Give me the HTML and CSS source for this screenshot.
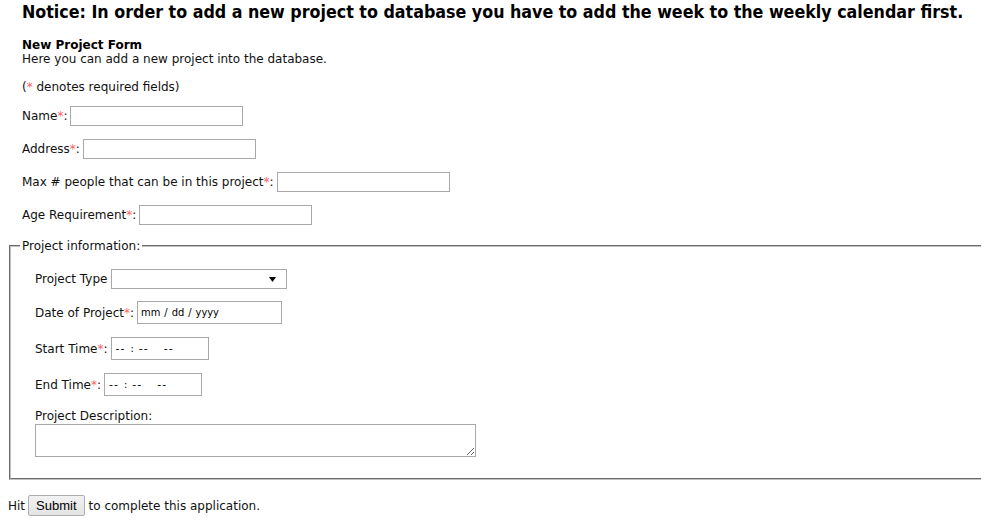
FILE: index.html
```html
<!DOCTYPE html>
<html>
<head>
<meta charset="utf-8">
<title>New Project Form</title>
<link rel="stylesheet" href="styles.css">
</head>
<body>
<div class="intro">
  <h1 class="notice">Notice: In order to add a new project to database you have to add the week to the weekly calendar first.</h1>
  <div class="form-title">New Project Form</div>
  <div class="form-desc">Here you can add a new project into the database.</div>
  <div class="req-note">(<span class="req">*</span> denotes required fields)</div>
  <div class="row first-row"><span class="label">Name<span class="req">*</span>:</span><input class="text" type="text"></div>
  <div class="row"><span class="label">Address<span class="req">*</span>:</span><input class="text" type="text"></div>
  <div class="row"><span class="label">Max # people that can be in this project<span class="req">*</span>:</span><input class="text" type="text"></div>
  <div class="row"><span class="label">Age Requirement<span class="req">*</span>:</span><input class="text" type="text"></div>
</div>
<fieldset class="project-info">
  <legend class="legend">Project information:</legend>
  <div class="fs-body">
    <div class="row row-select"><span class="label">Project Type</span><div class="select"><svg class="arrow" width="7" height="5" viewBox="0 0 7 5"><path d="M0 0H7L3.5 5Z" fill="#000"/></svg></div></div>
    <div class="row row-tall"><span class="label">Date of Project<span class="req">*</span>:</span><div class="field date"><span>mm</span><span class="sep">/</span><span>dd</span><span class="sep">/</span><span>yyyy</span></div></div>
    <div class="row row-tall"><span class="label">Start Time<span class="req">*</span>:</span><div class="field time"><span class="dash">--</span><span class="sep">:</span><span class="dash">--</span><span class="dash ampm">--</span></div></div>
    <div class="row row-tall"><span class="label">End Time<span class="req">*</span>:</span><div class="field time"><span class="dash">--</span><span class="sep">:</span><span class="dash">--</span><span class="dash ampm">--</span></div></div>
    <div class="desc-label">Project Description:</div>
    <textarea class="desc" rows="2"></textarea>
  </div>
</fieldset>
<div class="submit-row"><span>Hit</span><button class="submit" type="button">Submit</button><span>to complete this application.</span></div>
</body>
</html>
```
FILE: styles.css
```css
html {
  overflow: hidden;
}
body {
  margin: 0 8px;
  font-family: "DejaVu Sans", sans-serif;
  font-size: 12px;
  line-height: 14px;
  color: #111;
  background: #fff;
}
.intro {
  margin-left: 14px;
  display: flex;
  flex-direction: column;
}
.notice {
  margin: 0;
  font-family: "DejaVu Sans Condensed", "DejaVu Sans", sans-serif;
  font-size: 17.7px;
  line-height: 24px;
  font-weight: bold;
  color: #000;
  white-space: nowrap;
}
.form-title {
  margin-top: 14px;
  font-weight: bold;
  color: #000;
}
.req-note {
  margin-top: 14px;
}
.req {
  color: #ff6060;
}
.row {
  display: flex;
  align-items: center;
  gap: 3px;
  height: 20px;
  margin-top: 13px;
}
.first-row {
  margin-top: 12px;
}
.text {
  box-sizing: border-box;
  width: 173px;
  height: 20px;
  border: 1px solid #a9a9a9;
  margin: 0;
  padding: 0 2px;
  font: inherit;
  background: #fff;
}
.project-info {
  margin: 14px -30px 0 1px;
  padding: 16px 0 21px 9px;
  border: 2px groove #c0c0c0;
}
.legend {
  padding: 0 2px;
  line-height: 14px;
}
.fs-body {
  padding-left: 15px;
  display: flex;
  flex-direction: column;
  align-items: flex-start;
}
.fs-body .row:first-child {
  margin-top: 0;
}
.row-select {
  height: 20px;
  gap: 4px;
}
.select {
  box-sizing: border-box;
  width: 176px;
  height: 20px;
  border: 1px solid #a9a9a9;
  background: #fff;
  display: flex;
  align-items: center;
  justify-content: flex-end;
  padding-right: 10px;
}
.arrow {
  display: block;
}
.row-tall {
  height: 23px;
  margin-top: 12px;
}
.row-tall + .row-tall {
  margin-top: 13px;
}
.field {
  box-sizing: border-box;
  height: 23px;
  border: 1px solid #a9a9a9;
  background: #fff;
  display: flex;
  align-items: center;
  font-family: "DejaVu Sans Condensed", "DejaVu Sans", sans-serif;
  font-size: 11px;
  color: #000;
}
.date {
  width: 145px;
  padding-left: 3px;
  gap: 4px;
}
.time {
  width: 98px;
  padding-left: 4px;
  gap: 5px;
}
.dash {
  font-family: "DejaVu Sans", sans-serif;
  letter-spacing: 1px;
}
.time .ampm {
  margin-left: 10px;
}
.desc-label {
  margin-top: 13px;
  line-height: 14px;
}
.desc {
  display: block;
  box-sizing: border-box;
  width: 441px;
  height: 33px;
  margin: 1px 0 0;
  border: 1px solid #a9a9a9;
  padding: 2px;
  font: inherit;
}
.submit-row {
  margin-top: 15px;
  display: flex;
  align-items: center;
  height: 21px;
}
.submit {
  box-sizing: border-box;
  height: 21px;
  margin: 0 4px 0 3px;
  padding: 0 7px;
  font-family: "Liberation Sans", Arial, sans-serif;
  font-size: 13px;
  color: #000;
  border: 1px solid #adadad;
  border-radius: 2px;
  background: linear-gradient(#f2f2f2, #e3e3e3);
}
```
